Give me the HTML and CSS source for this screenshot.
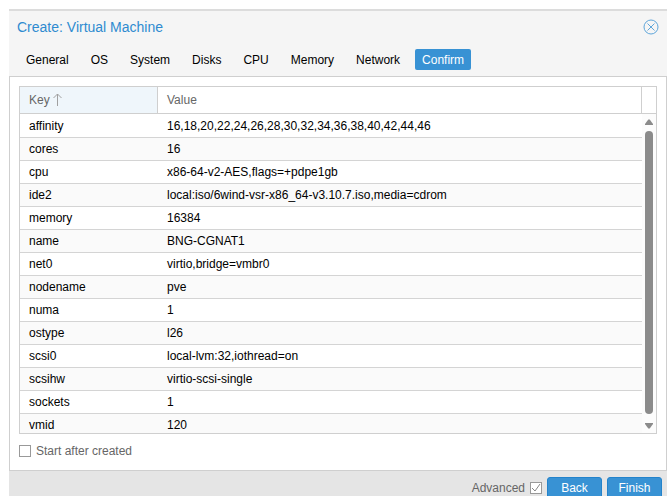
FILE: index.html
```html
<!DOCTYPE html>
<html lang="en">
<head>
  <meta charset="UTF-8" />
  <meta name="viewport" content="width=device-width, initial-scale=1.0" />
  <title>Create: Virtual Machine</title>
  <link rel="stylesheet" href="styles.css">
</head>
<body>

  <div class="window">
    <header class="window-header">
      <div class="title-bar">
        <h1>Create: Virtual Machine</h1>
        <button class="close" type="button" aria-label="Close">
          <svg width="16" height="16" viewBox="0 0 16 16" fill="none" stroke="#5fa6da">
            <circle cx="8" cy="8" r="7" />
            <path d="M4.5 4.5l7 7M11.5 4.5l-7 7" />
          </svg>
        </button>
      </div>
      <nav class="tabs">
        <button type="button">General</button>
        <button type="button">OS</button>
        <button type="button">System</button>
        <button type="button">Disks</button>
        <button type="button">CPU</button>
        <button type="button">Memory</button>
        <button type="button">Network</button>
        <button type="button" class="active">Confirm</button>
      </nav>
    </header>

    <main class="panel">
      <div class="grid">
        <div class="grid-view">
          <table>
            <thead>
              <tr>
                <th class="sorted">Key
                  <svg width="9" height="13" viewBox="0 0 9 13" fill="none" stroke="#a0a0a0">
                    <path d="M4.5 13V1M.5 5l4-4 4 4" />
                  </svg>
                </th>
                <th>Value</th>
              </tr>
            </thead>
            <tbody>
              <tr><td>affinity</td><td>16,18,20,22,24,26,28,30,32,34,36,38,40,42,44,46</td></tr>
              <tr><td>cores</td><td>16</td></tr>
              <tr><td>cpu</td><td>x86-64-v2-AES,flags=+pdpe1gb</td></tr>
              <tr><td>ide2</td><td>local:iso/6wind-vsr-x86_64-v3.10.7.iso,media=cdrom</td></tr>
              <tr><td>memory</td><td>16384</td></tr>
              <tr><td>name</td><td>BNG-CGNAT1</td></tr>
              <tr><td>net0</td><td>virtio,bridge=vmbr0</td></tr>
              <tr><td>nodename</td><td>pve</td></tr>
              <tr><td>numa</td><td>1</td></tr>
              <tr><td>ostype</td><td>l26</td></tr>
              <tr><td>scsi0</td><td>local-lvm:32,iothread=on</td></tr>
              <tr><td>scsihw</td><td>virtio-scsi-single</td></tr>
              <tr><td>sockets</td><td>1</td></tr>
              <tr><td>vmid</td><td>120</td></tr>
            </tbody>
          </table>
        </div>
        <div class="grid-side">
          <div class="side-head"></div>
          <div class="scrollbar">
            <svg width="8" height="6" viewBox="0 0 8 6" fill="#8b8b8b"><path d="M3.3.4h1.4L8 5v1H0V5z" /></svg>
            <div class="thumb"></div>
            <svg width="8" height="6" viewBox="0 0 8 6" fill="#8b8b8b"><path d="M3.3 5.6h1.4L8 1V0H0v1z" /></svg>
          </div>
        </div>
      </div>
      <label class="check">
        <input type="checkbox" id="start">
        Start after created
      </label>
    </main>

    <footer class="toolbar">
      <label class="check">
        Advanced
        <input type="checkbox" id="advanced" checked>
      </label>
      <button type="button">Back</button>
      <button type="button">Finish</button>
    </footer>
  </div>

</body>
</html>
```

FILE: styles.css
```css
* {
  box-sizing: border-box;
}

body {
  margin: 0;
  padding: 9px 5px 7px 9px;
  height: 100vh;
  background: #fff;
  color: #000;
  font-family: "Liberation Sans", Arial, sans-serif;
  font-size: 12px;
  line-height: 16px;
}

button {
  font: inherit;
  border: none;
  cursor: pointer;
}

.window {
  display: flex;
  flex-direction: column;
  height: 100%;
  overflow: hidden;
}

.window-header {
  background: #f5f5f5;
  border-top: 2px solid #dcdcdc;
  padding-bottom: 6px;
}

.title-bar {
  display: flex;
  justify-content: space-between;
  align-items: center;
  height: 32px;
  padding: 0 8px;
}

.title-bar h1 {
  margin: 0;
  font-size: 14px;
  font-weight: normal;
  color: #2f8bd0;
}

.close {
  display: flex;
  padding: 0;
  background: none;
}

.tabs {
  display: flex;
  gap: 8px;
  padding: 6px 10px 0;
}

.tabs button {
  height: 21px;
  padding: 0 7px;
  border-radius: 2px;
  background: none;
  color: #000;
}

.tabs .active {
  background: #3892d4;
  color: #fff;
}

.panel {
  flex: 1;
  min-height: 0;
  display: flex;
  flex-direction: column;
  gap: 9px;
  padding: 9px 9px 11px;
  border: 1px solid #cfcfcf;
  background: #fff;
}

.grid {
  flex: 1;
  min-height: 0;
  display: flex;
  border: 1px solid #cfcfcf;
}

.grid-view {
  flex: 1;
  overflow: hidden;
}

table {
  width: 100%;
  border-collapse: separate;
  border-spacing: 0;
}

th {
  height: 27px;
  padding: 0 9px;
  border-right: 1px solid #cfcfcf;
  border-bottom: 1px solid #cfcfcf;
  text-align: left;
  font-weight: normal;
  color: #666;
}

th:first-child {
  width: 138px;
}

th svg {
  vertical-align: -2px;
}

.sorted {
  background: #eff6fb;
}

td {
  height: 23px;
  padding: 0 9px;
  border-bottom: 1px solid #d4d4d4;
}

tbody tr:first-child td {
  height: 24px;
  padding-top: 1px;
}

tbody tr:nth-child(even) {
  background: #fafafa;
}

.grid-side {
  display: flex;
  flex-direction: column;
  width: 14px;
}

.side-head {
  height: 27px;
  border-bottom: 1px solid #cfcfcf;
}

.scrollbar {
  flex: 1;
  display: flex;
  flex-direction: column;
  align-items: center;
  gap: 6px;
  padding: 5px 0 4px;
  background: #fcfcfc;
}

.thumb {
  flex: 1;
  width: 8px;
  margin-bottom: 3px;
  border-radius: 4px;
  background: #8b8b8b;
}

.check {
  display: flex;
  align-items: center;
  gap: 5px;
  color: #666;
}

.check input {
  appearance: none;
  width: 12px;
  height: 12px;
  margin: 0;
  border: 1px solid #999;
  background: #fff;
}

.check input:checked {
  background: #fff url("data:image/svg+xml,%3Csvg xmlns='http://www.w3.org/2000/svg' viewBox='0 0 10 10'%3E%3Cpath d='M1 5l3 3 5-7' fill='none' stroke='%23888'/%3E%3C/svg%3E");
}

/* the window is cut off by the bottom edge, so the buttons run past it */
.toolbar {
  display: flex;
  justify-content: flex-end;
  align-items: flex-start;
  gap: 5px;
  height: 25px;
  padding: 6px 5px 0;
  background: #e5e5e5;
  overflow: hidden;
}

.toolbar .check {
  height: 22px;
}

.toolbar button {
  flex: none;
  min-width: 55px;
  height: 22px;
  border: 1px solid #2383cb;
  border-radius: 3px;
  background: #3892d4;
  color: #fff;
}
```
